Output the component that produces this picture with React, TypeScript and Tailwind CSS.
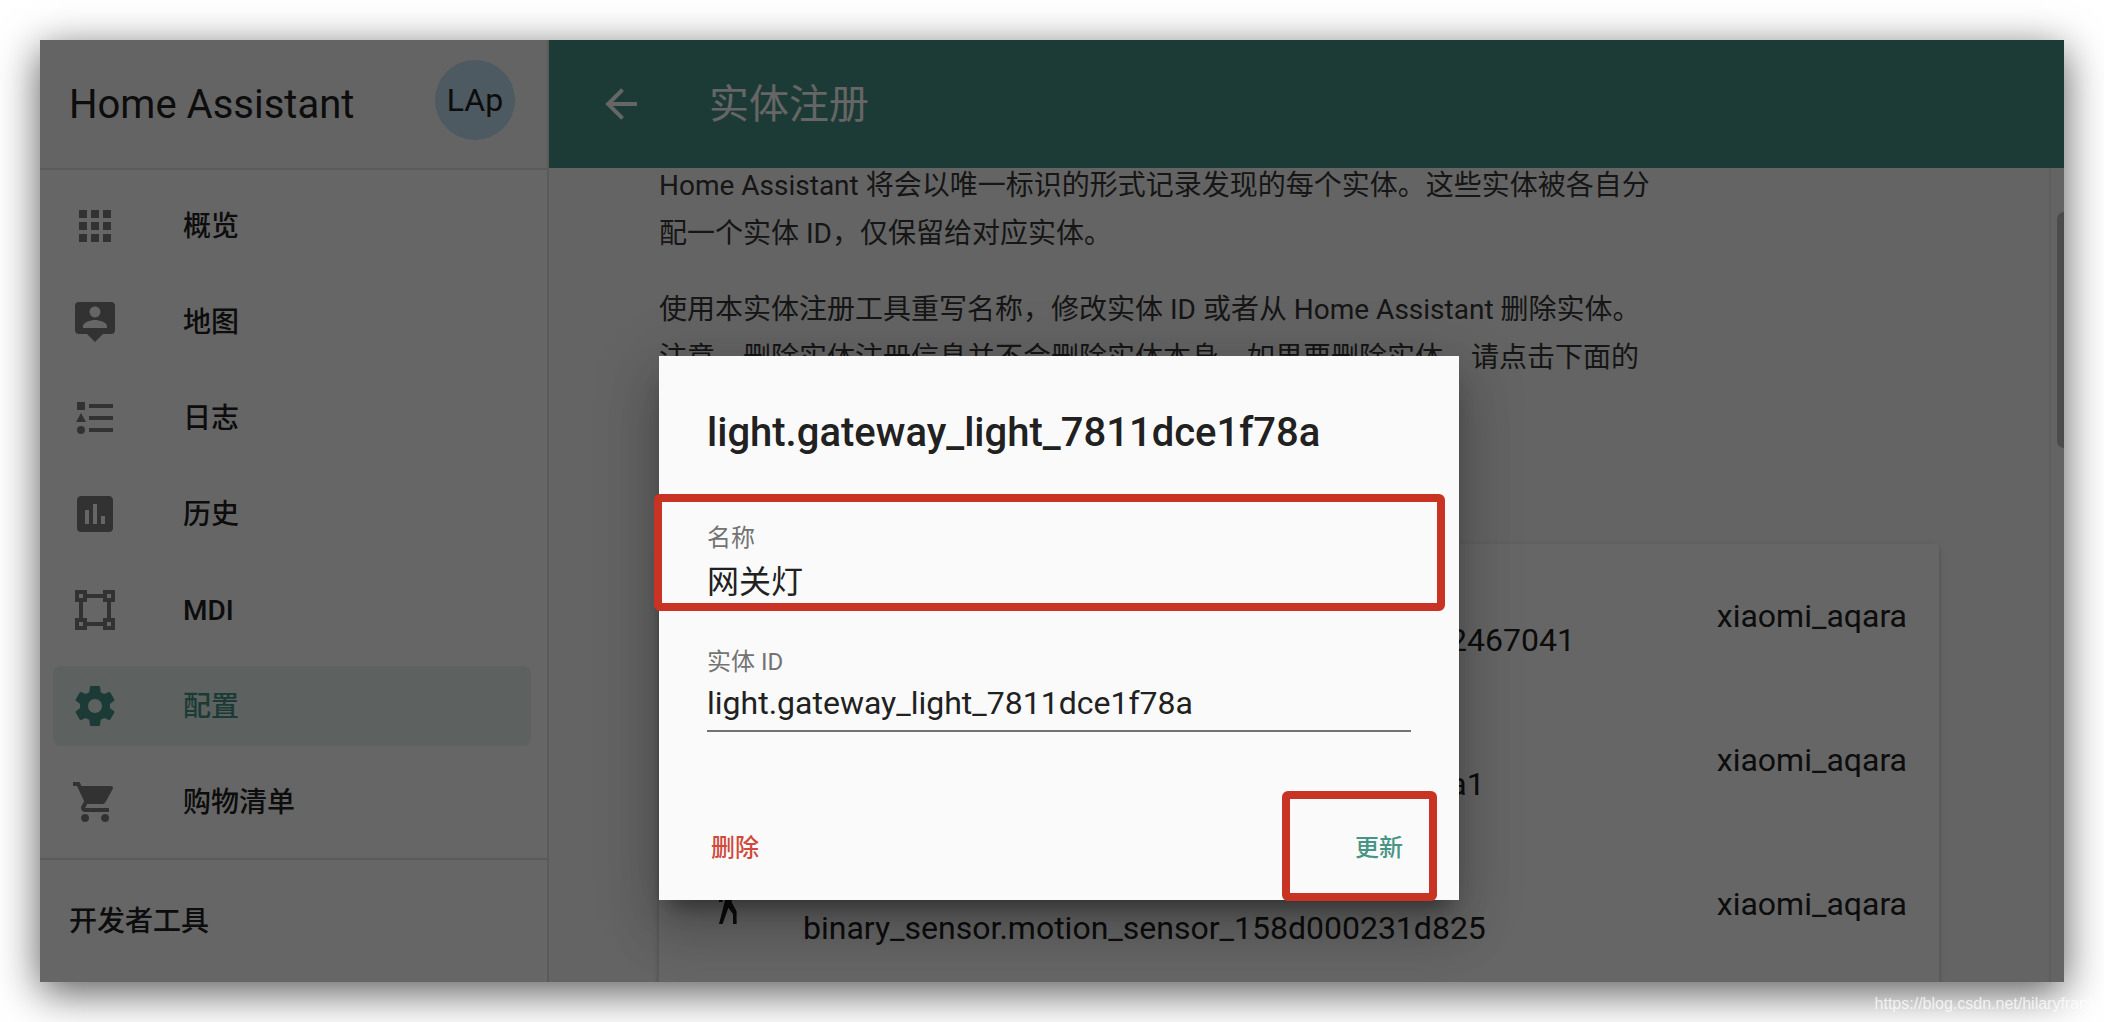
import { useState } from "react";
import type { ReactNode } from "react";

interface NavItem {
  label: string;
  icon: ReactNode;
  active?: boolean;
}

interface Entity {
  id: string;
  platform: string;
}

const ICONS = {
  apps: "M16,20H20V16H16M16,14H20V10H16M10,8H14V4H10M16,8H20V4H16M10,14H14V10H10M4,14H8V10H4M4,20H8V16H4M10,20H14V16H10M4,8H8V4H4V8Z",
  account:
    "M20,2H4A2,2 0 0,0 2,4V16A2,2 0 0,0 4,18H8L12,22L16,18H20A2,2 0 0,0 22,16V4A2,2 0 0,0 20,2M12,4.3C13.5,4.3 14.7,5.5 14.7,7C14.7,8.5 13.5,9.7 12,9.7C10.5,9.7 9.3,8.5 9.3,7C9.3,5.5 10.5,4.3 12,4.3M18,15H6V14.1C6,12.1 10,11 12,11C14,11 18,12.1 18,14.1V15Z",
  list: "M5,9.5L7.5,14H2.5L5,9.5M3,4H7V8H3V4M5,20A2,2 0 0,0 7,18A2,2 0 0,0 5,16A2,2 0 0,0 3,18A2,2 0 0,0 5,20M9,5V7H21V5H9M9,19H21V17H9V19M9,13H21V11H9V13Z",
  chart:
    "M17,17H15V13H17M13,17H11V7H13M9,17H7V10H9M19,3H5C3.89,3 3,3.89 3,5V19A2,2 0 0,0 5,21H19A2,2 0 0,0 21,19V5C21,3.89 20.1,3 19,3Z",
  vector:
    "M2,2H8V4H16V2H22V8H20V16H22V22H16V20H8V22H2V16H4V8H2V2M16,8V6H8V8H6V16H8V18H16V16H18V8H16M4,4V6H6V4H4M18,4V6H20V4H18M4,18V20H6V18H4M18,18V20H20V18H18Z",
  cog: "M12,15.5A3.5,3.5 0 0,1 8.5,12A3.5,3.5 0 0,1 12,8.5A3.5,3.5 0 0,1 15.5,12A3.5,3.5 0 0,1 12,15.5M19.43,12.97C19.47,12.65 19.5,12.33 19.5,12C19.5,11.67 19.47,11.34 19.43,11L21.54,9.37C21.73,9.22 21.78,8.95 21.66,8.73L19.66,5.27C19.54,5.05 19.27,4.96 19.05,5.05L16.56,6.05C16.04,5.66 15.5,5.32 14.87,5.07L14.5,2.42C14.46,2.18 14.25,2 14,2H10C9.75,2 9.54,2.18 9.5,2.42L9.13,5.07C8.5,5.32 7.96,5.66 7.44,6.05L4.95,5.05C4.73,4.96 4.46,5.05 4.34,5.27L2.34,8.73C2.21,8.95 2.27,9.22 2.46,9.37L4.57,11C4.53,11.34 4.5,11.67 4.5,12C4.5,12.33 4.53,12.65 4.57,12.97L2.46,14.63C2.27,14.78 2.21,15.05 2.34,15.27L4.34,18.73C4.46,18.95 4.73,19.03 4.95,18.95L7.44,17.94C7.96,18.34 8.5,18.68 9.13,18.93L9.5,21.58C9.54,21.82 9.75,22 10,22H14C14.25,22 14.46,21.82 14.5,21.58L14.87,18.93C15.5,18.67 16.04,18.34 16.56,17.94L19.05,18.95C19.27,19.03 19.54,18.95 19.66,18.73L21.66,15.27C21.78,15.05 21.73,14.78 21.54,14.63L19.43,12.97Z",
  cart: "M17,18A2,2 0 0,1 19,20A2,2 0 0,1 17,22C15.89,22 15,21.1 15,20C15,18.89 15.89,18 17,18M1,2H4.27L5.21,4H20A1,1 0 0,1 21,5C21,5.17 20.95,5.34 20.88,5.5L17.3,11.97C16.96,12.58 16.3,13 15.55,13H8.1L7.2,14.63L7.17,14.75A0.25,0.25 0 0,0 7.42,15H19V17H7C5.89,17 5,16.1 5,15C5,14.65 5.09,14.32 5.24,14.04L6.6,11.59L3,4H1V2M7,18A2,2 0 0,1 9,20A2,2 0 0,1 7,22C5.89,22 5,21.1 5,20C5,18.89 5.89,18 7,18Z",
  back: "M20,11V13H8L13.5,18.5L12.08,19.92L4.16,12L12.08,4.08L13.5,5.5L8,11H20Z",
  walk: "M14.12,10H19V8.2H15.38L13.38,4.87C13.08,4.37 12.54,4.03 11.92,4.03C11.74,4.03 11.58,4.06 11.42,4.11L6,5.8V11H7.8V7.33L9.91,6.67L6,22H7.8L10.67,13.89L13,17V22H14.8V15.59L12.31,11.05L13.04,8.18M14,3.8C15,3.8 15.8,3 15.8,2C15.8,1 15,0.2 14,0.2C13,0.2 12.2,1 12.2,2C12.2,3 13,3.8 14,3.8Z",
};

function Icon({ d }: { d: string }) {
  return (
    <svg viewBox="0 0 24 24" className="size-12 shrink-0 fill-current" aria-hidden="true">
      <path d={d} />
    </svg>
  );
}

const NAV: NavItem[] = [
  { label: "概览", icon: <Icon d={ICONS.apps} /> },
  { label: "地图", icon: <Icon d={ICONS.account} /> },
  { label: "日志", icon: <Icon d={ICONS.list} /> },
  { label: "历史", icon: <Icon d={ICONS.chart} /> },
  { label: "MDI", icon: <Icon d={ICONS.vector} /> },
  { label: "配置", icon: <Icon d={ICONS.cog} />, active: true },
  { label: "购物清单", icon: <Icon d={ICONS.cart} /> },
];

const ENTITIES: Entity[] = [
  { id: "binary_sensor.door_window_sensor_158d0002467041", platform: "xiaomi_aqara" },
  { id: "binary_sensor.motion_sensor_158d000236a0a1", platform: "xiaomi_aqara" },
  { id: "binary_sensor.motion_sensor_158d000231d825", platform: "xiaomi_aqara" },
];

function Sidebar() {
  return (
    <aside className="flex w-[509px] shrink-0 flex-col border-r-2 border-[#e0e0e0] bg-white">
      <div className="flex h-[130px] shrink-0 items-start justify-between border-b-2 border-[#e0e0e0] bg-[#fafafa] pr-8 pl-[29px]">
        <span className="pt-[41px] text-[40px] leading-12">Home Assistant</span>
        <button
          type="button"
          className="mt-5 flex size-20 items-center justify-center rounded-full bg-[#c0e0f5] text-[32px]"
        >
          LAp
        </button>
      </div>
      <nav className="flex flex-col gap-4 border-b-2 border-[#e0e0e0] py-4 pr-4 pl-[13px]">
        {NAV.map((item) => (
          <a
            key={item.label}
            href="#"
            className={`flex h-20 items-center gap-16 rounded-lg px-[18px] text-[28px] font-medium ${
              item.active ? "bg-[#489487]/12 text-[#489487]" : ""
            }`}
          >
            <span className={item.active ? "" : "text-[#7d7d7d]"}>{item.icon}</span>
            <span className="pt-0.5">{item.label}</span>
          </a>
        ))}
      </nav>
      <h2 className="px-[29px] pt-[42px] text-[28px] leading-10 font-medium">开发者工具</h2>
    </aside>
  );
}

function EntityRow({ entity }: { entity: Entity }) {
  return (
    <li className="flex h-36 items-center gap-12 pr-8 pl-12 text-[32px] leading-12">
      <Icon d={ICONS.walk} />
      <span className="flex-1 pt-12">{entity.id}</span>
      <span>{entity.platform}</span>
    </li>
  );
}

function RegistryPage() {
  return (
    <main className="flex min-w-0 flex-1 flex-col bg-[#fafafa]">
      <header className="flex h-32 shrink-0 items-center gap-16 bg-[#489487] px-12 text-white">
        <button type="button" aria-label="返回">
          <Icon d={ICONS.back} />
        </button>
        <h1 className="pt-0.5 text-[40px]">实体注册</h1>
      </header>
      <div className="flex min-h-0 flex-1 overflow-hidden">
        <div className="min-w-0 flex-1 px-8">
          {/* the list is scrolled a little, so the intro starts above the edge */}
          <div className="mx-auto -mt-1.5 flex max-w-[1280px] flex-col">
            <div className="flex min-h-[382px] max-w-[1000px] flex-col gap-7 text-[28px] leading-12 text-[#373737]">
              <p>
                Home Assistant 将会以唯一标识的形式记录发现的每个实体。这些实体被各自分配一个实体
                ID，仅保留给对应实体。
              </p>
              <p>
                使用本实体注册工具重写名称，修改实体 ID 或者从 Home Assistant
                删除实体。注意，删除实体注册信息并不会删除实体本身。如果要删除实体，请点击下面的
              </p>
            </div>
            <ul className="rounded-sm bg-white pb-8 shadow-[0_4px_4px_rgba(0,0,0,0.14),0_2px_10px_rgba(0,0,0,0.12)]">
              {ENTITIES.map((entity) => (
                <EntityRow key={entity.id} entity={entity} />
              ))}
            </ul>
          </div>
        </div>
        <div className="flex w-[15px] justify-end border-l-2 border-[#ebebeb] pt-11">
          <div className="h-[236px] w-[7px] rounded-l-lg bg-[#bcbcbc]" />
        </div>
      </div>
    </main>
  );
}

function EntityDialog() {
  const [name, setName] = useState("网关灯");
  const [entityId, setEntityId] = useState("light.gateway_light_7811dce1f78a");

  return (
    <div
      role="dialog"
      aria-labelledby="dialog-title"
      className="relative flex w-[800px] flex-col bg-[#fafafa] px-12 shadow-[0_32px_48px_4px_rgba(0,0,0,0.14),0_12px_60px_10px_rgba(0,0,0,0.12),0_16px_20px_-10px_rgba(0,0,0,0.4)]"
    >
      <h2 id="dialog-title" className="pt-12 text-[40px] leading-[58px] font-medium">
        light.gateway_light_7811dce1f78a
      </h2>
      <div className="flex flex-col gap-10 pt-[62px]">
        <div className="flex flex-col border-b-2 border-[#737373]">
          <label htmlFor="name" className="text-[24px] leading-7 text-[#737373]">
            名称
          </label>
          <input
            id="name"
            value={name}
            onChange={(e) => setName(e.target.value)}
            className="h-[54px] text-[32px] outline-none"
          />
        </div>
        <div className="flex flex-col border-b-2 border-[#737373]">
          <label htmlFor="entity-id" className="text-[24px] leading-7 text-[#737373]">
            实体 ID
          </label>
          <input
            id="entity-id"
            value={entityId}
            onChange={(e) => setEntityId(e.target.value)}
            className="h-[54px] text-[32px] outline-none"
          />
        </div>
      </div>
      <div className="flex justify-between px-1 pt-20 pb-4 text-[24px] font-medium">
        <button type="button" className="h-18 text-[#d0493a]">
          删除
        </button>
        <button type="button" className="h-18 px-1 text-[#489487]">
          更新
        </button>
      </div>
      {/* highlight frames around the name field and the update button */}
      <div className="pointer-events-none absolute top-[138px] -left-[5px] h-[117px] w-[791px] rounded-md border-8 border-[#c93324]" />
      <div className="pointer-events-none absolute top-[435px] right-[22px] h-[110px] w-[155px] rounded-md border-8 border-[#c93324]" />
    </div>
  );
}

export default function App() {
  return (
    <div className="relative h-screen overflow-hidden bg-white p-10 font-['Roboto','Noto_Sans_CJK_SC',sans-serif] text-[#212121]">
      <div className="relative flex h-full overflow-hidden shadow-[0_10px_40px_rgba(0,0,0,0.66)]">
        <Sidebar />
        <RegistryPage />
        <div className="absolute inset-0 flex items-end justify-center bg-black/60 pb-[82px] pl-3.5">
          <EntityDialog />
        </div>
      </div>
      <a
        href="https://blog.csdn.net/hilaryfrank"
        className="absolute right-2 bottom-1.5 font-['Liberation_Sans',sans-serif] text-[16px] leading-6 text-white/75"
      >
        https://blog.csdn.net/hilaryfrank
      </a>
    </div>
  );
}
